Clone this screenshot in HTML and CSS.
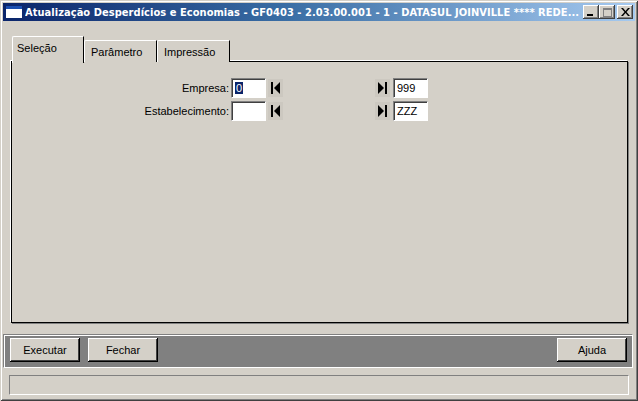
FILE: index.html
```html
<!DOCTYPE html>
<html lang="pt">
<head>
  <meta charset="UTF-8" />
  <title>Atualização Desperdícios e Economias - GF0403</title>
  <link rel="stylesheet" href="styles.css">
</head>
<body>
  <div class="window">
    <!-- Title bar -->
    <div class="titlebar">
      <span class="app-icon"></span>
      <span class="title">Atualização Desperdícios e Economias - GF0403 - 2.03.00.001 - 1 - DATASUL JOINVILLE **** REDE...</span>
      <div class="controls">
        <span class="ctl ctl-min"><svg width="8" height="7" viewBox="0 0 8 7"><rect x="0" y="5" width="6" height="2" fill="#000"/></svg></span>
        <span class="ctl ctl-max"><svg width="9" height="9" viewBox="0 0 9 9"><rect x="0.5" y="0.5" width="8" height="8" fill="none" stroke="#808080"/><rect x="0" y="0" width="9" height="2" fill="#808080"/></svg></span>
        <span class="ctl ctl-close"><svg width="9" height="8" viewBox="0 0 9 8"><path d="M0 0 L2 0 L4.5 3 L7 0 L9 0 L5.5 4 L9 8 L7 8 L4.5 5 L2 8 L0 8 L3.5 4 Z" fill="#000"/></svg></span>
      </div>
    </div>

    <!-- Tabs -->
    <div class="tabs">
      <div class="tab active">Seleção</div>
      <div class="tab">Parâmetro</div>
      <div class="tab">Impressão</div>
    </div>

    <div class="panel">
      <div class="form-row">
        <label class="field-label">Empresa:</label>
        <span class="input"><span class="sel">0</span></span>
        <span class="nav-icon"><svg width="15" height="18" viewBox="0 0 15 18"><rect x="3" y="3" width="2" height="12" fill="#000"/><polygon points="12,3 6,9 12,15" fill="#000"/></svg></span>
        <span class="nav-icon nav-last"><svg width="15" height="18" viewBox="0 0 15 18"><polygon points="3,3 9,9 3,15" fill="#000"/><rect x="10" y="3" width="2" height="12" fill="#000"/></svg></span>
        <span class="input">999</span>
      </div>
      <div class="form-row">
        <label class="field-label">Estabelecimento:</label>
        <span class="input"></span>
        <span class="nav-icon"><svg width="15" height="18" viewBox="0 0 15 18"><rect x="3" y="3" width="2" height="12" fill="#000"/><polygon points="12,3 6,9 12,15" fill="#000"/></svg></span>
        <span class="nav-icon nav-last"><svg width="15" height="18" viewBox="0 0 15 18"><polygon points="3,3 9,9 3,15" fill="#000"/><rect x="10" y="3" width="2" height="12" fill="#000"/></svg></span>
        <span class="input">ZZZ</span>
      </div>
    </div>

    <!-- Action buttons -->
    <div class="buttonbar">
      <button class="btn">Executar</button>
      <button class="btn">Fechar</button>
      <span class="spacer"></span>
      <button class="btn">Ajuda</button>
    </div>

    <div class="statusbar"></div>
  </div>
</body>
</html>
```

FILE: styles.css
```css
* {
  margin: 0;
  padding: 0;
  box-sizing: border-box;
}

body {
  font-family: 'Liberation Sans', Arial, sans-serif;
  font-size: 11px;
  background: #d4d0c8;
  overflow: hidden;
}

/* Window frame */
.window {
  width: 638px;
  height: 401px;
  background: #d4d0c8;
  padding: 3px;
  display: flex;
  flex-direction: column;
  box-shadow:
    inset 1px 1px 0 #d4d0c8,
    inset -1px -1px 0 #404040,
    inset 2px 2px 0 #ffffff,
    inset -2px -2px 0 #808080;
}

/* Title bar */
.titlebar {
  height: 18px;
  display: flex;
  align-items: center;
  background: linear-gradient(90deg, #0a246a 0%, #3a6ea5 45%, #a6caf0 100%);
  color: #fff;
  padding-left: 3px;
}

.app-icon {
  width: 16px;
  height: 12px;
  background: #fff;
  border-top: 3px solid #1c4fb0;
  margin-right: 3px;
}

.title {
  font-family: 'DejaVu Sans Condensed', 'DejaVu Sans', sans-serif;
  font-weight: bold;
  font-size: 11px;
  letter-spacing: 0.05px;
  white-space: nowrap;
  flex: 1;
  overflow: hidden;
}

.controls {
  display: flex;
  margin-right: 2px;
}

.ctl {
  width: 16px;
  height: 14px;
  background: #d4d0c8;
  display: flex;
  align-items: center;
  justify-content: center;
  box-shadow:
    inset -1px -1px 0 #404040,
    inset 1px 1px 0 #ffffff,
    inset -2px -2px 0 #808080;
}

.ctl-close {
  margin-left: 2px;
}

/* Tabs */
.tabs {
  display: flex;
  align-items: flex-end;
  height: 26px;
  margin-top: 15px;
  padding-left: 9px;
  position: relative;
  z-index: 2;
}

.tab {
  height: 22px;
  width: 73px;
  padding: 5px 0 0 6px;
  background: #d4d0c8;
  border-top: 1px solid #fff;
  border-left: 1px solid #fff;
  border-right: 1px solid #000;
  border-top-left-radius: 2px;
  color: #000;
}

.tab.active {
  width: 72px;
  height: 27px;
  margin-bottom: -1px;
  padding: 5px 0 0 4px;
}

/* Tab panel */
.panel {
  height: 262px;
  margin: -1px 7px 0 8px;
  border: 1px solid #000;
  box-shadow: -1px -1px 0 #fff, 1px 1px 0 #808080;
  padding-top: 16px;
  display: flex;
  flex-direction: column;
  gap: 3px;
}

.form-row {
  display: flex;
  align-items: center;
  height: 20px;
}

.field-label {
  width: 217px;
  text-align: right;
  margin-right: 2px;
  color: #000;
}

.input {
  width: 35px;
  height: 20px;
  background: #fff;
  border-top: 1px solid #808080;
  border-left: 1px solid #808080;
  border-right: 1px solid #fff;
  border-bottom: 1px solid #fff;
  box-shadow: inset 1px 1px 0 #404040;
  padding: 3px 0 0 3px;
  line-height: 13px;
}

.sel {
  background: #0a246a;
  color: #fff;
  padding: 0 1px;
}

.nav-icon {
  width: 15px;
  height: 18px;
  margin-left: 2px;
  background: #ccc8c0;
  display: flex;
}

.nav-last {
  margin-left: 92px;
  margin-right: 3px;
}

/* Button bar */
.buttonbar {
  margin: 11px 2px 0 0;
  height: 34px;
  background: #808080;
  border-top: 1px solid #808080;
  border-left: 1px solid #808080;
  border-right: 1px solid #fff;
  border-bottom: 1px solid #fff;
  box-shadow: inset 1px 1px 0 #fff;
  padding: 3px 5px 0 6px;
  display: flex;
  gap: 8px;
}

.btn {
  width: 70px;
  height: 24px;
  font-family: 'Liberation Sans', Arial, sans-serif;
  font-size: 11px;
  color: #000;
  background: #d4d0c8;
  border: none;
  box-shadow:
    inset -1px -1px 0 #000,
    inset 1px 1px 0 #fff,
    inset -2px -2px 0 #404040;
}

.spacer {
  flex: 1;
}

/* Status bar */
.statusbar {
  height: 20px;
  margin: 7px 6px 0 6px;
  border-top: 1px solid #808080;
  border-left: 1px solid #808080;
  border-right: 1px solid #fff;
  border-bottom: 1px solid #fff;
}
```
